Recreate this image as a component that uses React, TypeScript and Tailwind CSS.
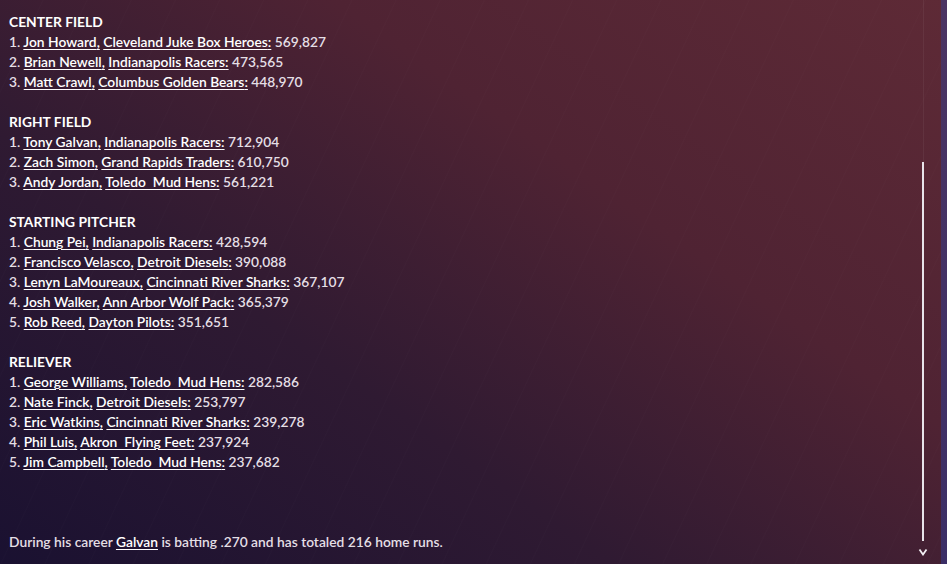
import React from "react";

type Entry = { player: string; team: string; votes: string };
type Section = { title: string; entries: Entry[] };

const SECTIONS: Section[] = [
  {
    title: "CENTER FIELD",
    entries: [
      { player: "Jon Howard", team: "Cleveland Juke Box Heroes", votes: "569,827" },
      { player: "Brian Newell", team: "Indianapolis Racers", votes: "473,565" },
      { player: "Matt Crawl", team: "Columbus Golden Bears", votes: "448,970" },
    ],
  },
  {
    title: "RIGHT FIELD",
    entries: [
      { player: "Tony Galvan", team: "Indianapolis Racers", votes: "712,904" },
      { player: "Zach Simon", team: "Grand Rapids Traders", votes: "610,750" },
      { player: "Andy Jordan", team: "Toledo\u00a0 Mud Hens", votes: "561,221" },
    ],
  },
  {
    title: "STARTING PITCHER",
    entries: [
      { player: "Chung Pei", team: "Indianapolis Racers", votes: "428,594" },
      { player: "Francisco Velasco", team: "Detroit Diesels", votes: "390,088" },
      { player: "Lenyn LaMoureaux", team: "Cincinnati River Sharks", votes: "367,107" },
      { player: "Josh Walker", team: "Ann Arbor Wolf Pack", votes: "365,379" },
      { player: "Rob Reed", team: "Dayton Pilots", votes: "351,651" },
    ],
  },
  {
    title: "RELIEVER",
    entries: [
      { player: "George Williams", team: "Toledo\u00a0 Mud Hens", votes: "282,586" },
      { player: "Nate Finck", team: "Detroit Diesels", votes: "253,797" },
      { player: "Eric Watkins", team: "Cincinnati River Sharks", votes: "239,278" },
      { player: "Phil Luis", team: "Akron\u00a0 Flying Feet", votes: "237,924" },
      { player: "Jim Campbell", team: "Toledo\u00a0 Mud Hens", votes: "237,682" },
    ],
  },
];

function Link({ children }: { children: React.ReactNode }) {
  return (
    <span className="text-white underline decoration-1 underline-offset-2">
      {children}
    </span>
  );
}

export default function App() {
  return (
    <div className="relative flex h-[564px] w-[947px] overflow-hidden bg-[linear-gradient(215deg,#5e2a36_0%,#4f2333_35%,#2f1a32_65%,#1a1131_100%)] font-['Lato','Noto_Sans',sans-serif] text-[13.8px] font-semibold leading-[20px] text-[#e4dfe5]">
      {/* faint diagonal texture */}
      <div className="pointer-events-none absolute inset-0 bg-[repeating-linear-gradient(115deg,transparent_0px,transparent_38px,rgba(255,255,255,0.012)_39px,transparent_40px)]" />

      <div className="relative flex flex-1 flex-col gap-[20px] pl-[9px] pt-[12px]">
        {SECTIONS.map((s) => (
          <div key={s.title}>
            <div className="font-bold text-white">{s.title}</div>
            {s.entries.map((e, i) => (
              <div key={e.player}>
                {i + 1}. <Link>{e.player},</Link> <Link>{e.team}:</Link> {e.votes}
              </div>
            ))}
          </div>
        ))}
        <div className="mt-[40px]">
          During his career <Link>Galvan</Link> is batting .270 and has totaled 216 home runs.
        </div>
      </div>

      {/* scrollbar */}
      <div className="relative flex w-[20px] flex-col items-center">
        <div className="h-[162px] w-px bg-white/5" />
        <div className="w-[2px] flex-1 bg-[#e8e4ea]" />
        <svg className="mb-[8px] mt-[7px]" width="10" height="8" viewBox="0 0 10 8">
          <path d="M1.5 1.5 L5 6.5 L8.5 1.5" fill="none" stroke="#f2eef2" strokeWidth="1.8" />
        </svg>
      </div>
      <div className="relative ml-[8px] w-[6px] bg-[linear-gradient(180deg,#4b3462,#3b2e66)]" />
    </div>
  );
}
